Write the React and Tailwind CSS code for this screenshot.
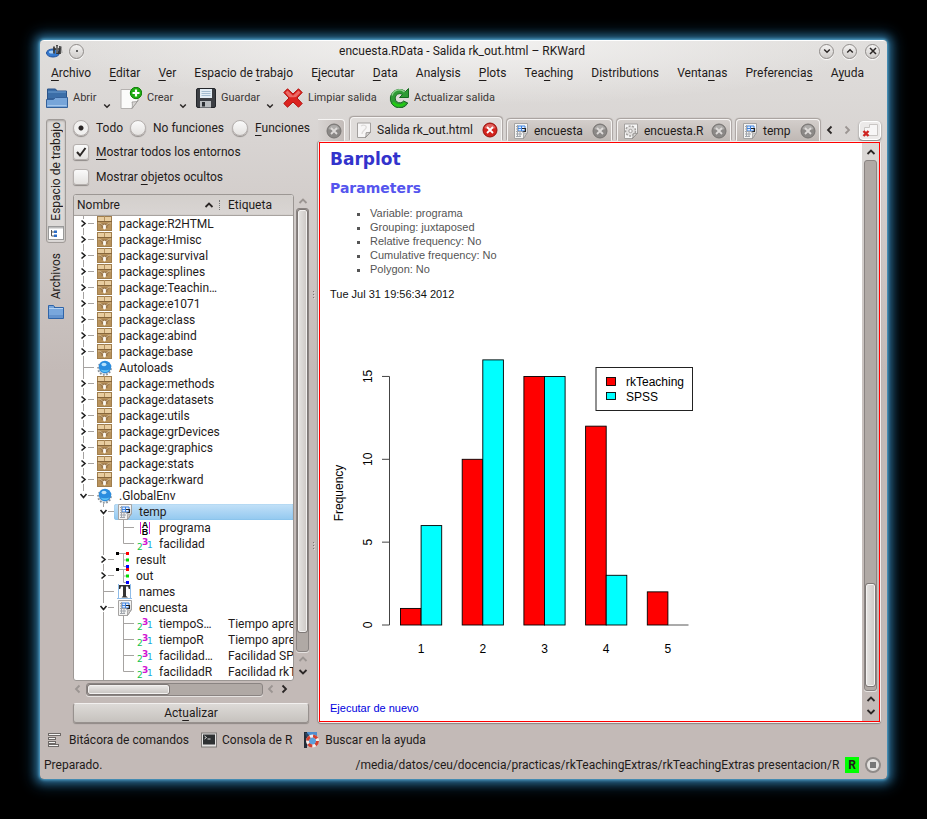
import React from "react";

const sans = "font-['Roboto','Noto_Sans',sans-serif]";

/* Text whose accelerator letter is preceded by "&". */
function Mnemonic({ text }) {
  const at = text.indexOf("&");
  if (at < 0) return <span className="whitespace-nowrap">{text}</span>;
  return (
    <span className="whitespace-pre">
      {text.slice(0, at)}
      <span className="underline underline-offset-[3px]">{text[at + 1]}</span>
      {text.slice(at + 2)}
    </span>
  );
}

function Chevron({ dir = "down", className = "text-[#2b2726]", size = 10 }) {
  const d = {
    down: "M1.5 3 5 6.5 8.5 3",
    up: "M1.5 7 5 3.5 8.5 7",
    left: "M6.5 1.5 3 5 6.5 8.5",
    right: "M3.5 1.5 7 5 3.5 8.5",
  }[dir];
  return (
    <svg viewBox="0 0 10 10" width={size} height={size} className={`block shrink-0 ${className}`}>
      <path d={d} fill="none" stroke="currentColor" strokeWidth="1.8" />
    </svg>
  );
}

/* ---------- icons ---------- */

function FolderIcon({ size = 22 }) {
  return (
    <svg viewBox="0 0 22 20" width={size} height={Math.round((size * 20) / 22)} className="block shrink-0">
      <path d="M1.500 1h8l1.500 2h9.500v8h-19z" fill="#3b6ea8" stroke="#2a5389" />
      <path d="M2 4h18" stroke="#6f9fd2" />
      <path d="M.5 11.500h7l2-2h12v10H.5z" fill="#77a5d9" stroke="#34619a" />
      <path d="M1.500 17.500h19" stroke="#a3c5ea" />
    </svg>
  );
}

function SideFolderIcon() {
  return (
    <svg viewBox="0 0 16 15" width="16" height="15" className="block">
      <path d="M.5 1.500h5l1.500 2h8.500v11H.5z" fill="#79a7dc" stroke="#2f64a8" />
      <path d="M1 4.500h14" stroke="#b5d3f3" />
      <path d="M6 3.500h9" stroke="#2f64a8" />
      <path d="M1 11h14v3H1z" fill="#6493cd" />
    </svg>
  );
}

function NewDocIcon() {
  return (
    <svg viewBox="0 0 22 22" width="22" height="22" className="block shrink-0">
      <path d="M1 2.500h17v11l-6 8H1z" fill="#fbfbfa" stroke="#b5b2b0" />
      <path d="M18 13.500c-2 2-4 1-6 1.500.5 2.500.5 4 0 6.500z" fill="#d9d7d5" stroke="#8d8a88" strokeWidth=".7" />
      <circle cx="16" cy="6" r="5.700" fill="#1fae12" stroke="#0d7d06" />
      <path d="M16 2.500v7M12.500 6h7" stroke="#fff" strokeWidth="2.200" />
    </svg>
  );
}

function SaveIcon() {
  return (
    <svg viewBox="0 0 20 20" width="20" height="20" className="block shrink-0">
      <rect x=".5" y=".5" width="19" height="19" rx="1.500" fill="#3c3f44" stroke="#23262a" />
      <rect x="4" y="1" width="12" height="9" fill="#e3edf5" />
      <path d="M5.500 3.500h9M5.500 5.500h9M5.500 7.500h9" stroke="#9cb7cc" strokeWidth=".9" />
      <rect x="4" y="13" width="11" height="6.500" fill="#b9bcbf" />
      <rect x="6" y="14" width="3" height="4.500" fill="#2c2f33" />
    </svg>
  );
}

function ClearIcon() {
  return (
    <svg viewBox="0 0 20 20" width="20" height="20" className="block shrink-0">
      <path d="M4.500 0.800 10 6l5.500-5.200L19.200 4.500 14 10l5.200 5.500-3.700 3.700L10 14l-5.500 5.200L.8 15.500 6 10 .8 4.500z" fill="#dc2420" stroke="#b3120f" />
      <path d="M4.500 2.500 10 7.800l5.500-5.300 2 2-4.500 4.500c-3 .3-5 .3-7 0L2.500 4.500z" fill="#f0837d" opacity=".75" />
    </svg>
  );
}

function ReloadIcon() {
  return (
    <svg viewBox="0 0 20 20" width="20" height="20" className="block shrink-0">
      <path d="M19.500.5v9h-9l3-3a4.600 4.600 0 1 0 1 6.500l4.300 2A9.300 9.300 0 1 1 16.500 3.500z" fill="#2f9c36" stroke="#176b20" />
      <path d="M3 7.500A7.500 7.500 0 0 1 15.500 4" stroke="#8ccf8d" fill="none" strokeWidth="1.500" />
      <path d="M4 14.500c3.500 4 9 4 12 .5" stroke="#22cf10" fill="none" strokeWidth="2" />
    </svg>
  );
}

function PackageIcon() {
  return (
    <svg viewBox="0 0 16 16" width="16" height="16" className="block">
      <rect x=".5" y=".5" width="14" height="14" fill="#b9935c" stroke="#a07e4d" />
      <path d="M1 1h13v4H1z" fill="#e8cda0" />
      <path d="M7.500 0v5" stroke="#b3905d" />
      <path d="M0 5.500h15" stroke="#86663c" />
      <path d="M1.500 7.500h12l-3 2.500v2h-6v-2z" fill="#98744a" />
      <path d="M1 7c2.500 0 4 1.500 5 2.500h3C10 8.500 11.500 7 14 7" fill="none" stroke="#ddc79e" strokeWidth=".8" />
      <ellipse cx="7.500" cy="11" rx="1.500" ry="2.500" fill="#fbf8f1" />
    </svg>
  );
}

function GlobeIcon() {
  return (
    <svg viewBox="0 0 16 16" width="16" height="16" className="block overflow-visible">
      <circle cx="7.500" cy="8.500" r="6.300" fill="#dfe3e6" stroke="#868e95" strokeWidth="2" strokeDasharray="1.500 1.700" />
      <circle cx="8" cy="7" r="6.200" fill="#2a8ddf" />
      <path d="M3.500 9.500a5.200 5.200 0 0 0 9 0c-2 1-7 1-9 0z" fill="#5fc3f6" />
      <ellipse cx="7" cy="4.500" rx="2.500" ry="1.800" fill="#b6e1fb" />
    </svg>
  );
}

function DataFrameIcon({ size = 16 }) {
  return (
    <svg viewBox="0 0 16 16" width={size} height={size} className="block">
      <path d="M1.500.5h13v9l-4 6h-9z" fill="#f4f4f3" stroke="#a5a3a2" />
      <path d="M14.500 9.500c-1.500 1-2.500.5-4 1v5z" fill="#cfcdcc" stroke="#8c8a89" strokeWidth=".6" />
      <path d="M5 3h7v5H5z" fill="#e5f0ff" stroke="#3c82e0" />
      <path d="M8.500 3v5M5 5.500h7" stroke="#3c82e0" />
      <path d="M3 3.500h1.500M3 6h1.500M3 8.500h6M3 11h6M3 13.500h5" stroke="#a0a5ac" />
      <path d="M4.500 2v12M7 9v5" stroke="#a0a5ac" />
      <path d="M9 5.500h3.500V9M9.500 9 12 8.500" stroke="#222" fill="none" strokeWidth="1.200" />
    </svg>
  );
}

function FactorIcon() {
  return (
    <svg viewBox="0 0 16 16" width="16" height="16" className="block overflow-visible">
      <path d="M3.500 2v12M12.500 2v12" stroke="#e020e0" />
      <text x="8" y="8" fontSize="9" textAnchor="middle" fontWeight="bold" fontFamily="Liberation Sans, sans-serif">A</text>
      <text x="8" y="15" fontSize="9" textAnchor="middle" fontWeight="bold" fontFamily="Liberation Sans, sans-serif">B</text>
    </svg>
  );
}

function NumericIcon() {
  return (
    <svg viewBox="0 0 16 16" width="16" height="16" className="block overflow-visible" fontFamily="DejaVu Sans, sans-serif">
      <text x="0" y="14" fontSize="9" fill="#12c34a">2</text>
      <text x="5" y="9" fontSize="9" fill="#d214d2" fontWeight="bold">3</text>
      <text x="10" y="12" fontSize="9" fill="#18a9dc">1</text>
    </svg>
  );
}

function ListIcon() {
  return (
    <svg viewBox="0 0 16 16" width="16" height="16" className="block overflow-visible">
      <path d="M1 1.500h10M6.500 1.500v13M6.500 8h5M6.500 14.500h5" stroke="#aaa" fill="none" />
      <path d="M-1 0h3v3h-3z" fill="#000" />
      <path d="M9 0h3v3H9z" fill="#f00" />
      <path d="M9 6.500h3v3H9z" fill="#0d0" />
      <path d="M9 13h3v3H9z" fill="#00f" />
    </svg>
  );
}

function CharIcon() {
  return (
    <svg viewBox="0 0 16 16" width="16" height="16" className="block">
      <path d="M1.500 0v14M13.500 0v14M0 14.500h15" stroke="#8fbce8" />
      <path d="M2 1h11v4h-1.200L11 2.500H9V12l2 1.500H4.500L6 12V2.500H4L3.200 5H2z" fill="#333" />
    </svg>
  );
}

function DocIcon({ gear }) {
  return (
    <svg viewBox="0 0 16 16" width="16" height="16" className="block shrink-0">
      <path d="M1.500 1h13v9l-5 5.500h-8z" fill="#f7f6f6" stroke="#a3a09e" />
      {gear ? (
        <g stroke="#a19e9c">
          <circle cx="7.500" cy="8" r="5" fill="#e2e0df" strokeWidth="1.500" strokeDasharray="2 1.500" />
          <circle cx="7.500" cy="8" r="1.700" fill="#f7f6f6" />
        </g>
      ) : (
        <path d="M5 4c3-2 6 0 5 2S6 9 6 12" stroke="#dddbda" fill="none" strokeWidth="1.300" />
      )}
      <path d="M14.500 10c-2 1-3 .3-4.500.8.3 1.700 0 3-.5 4.700z" fill="#dcdad9" stroke="#7f7c7a" strokeWidth=".7" />
    </svg>
  );
}

function TreeViewIcon() {
  return (
    <svg viewBox="0 0 16 16" width="16" height="16" className="block">
      <rect x=".5" y="1.500" width="15" height="13" fill="#fff" stroke="#999" />
      <path d="M1 2h14v1.500H1z" fill="#bbb" />
      <path d="M3.500 5v6h3M3.500 7h3" stroke="#555" fill="none" />
      <path d="M6 5.500h3v2.500H6zM6 9.500h3V12H6z" fill="#2c6cc4" />
    </svg>
  );
}

function AppIcon() {
  return (
    <svg viewBox="0 0 18 14" width="18" height="14" className="block">
      <ellipse cx="7" cy="9" rx="6.500" ry="4" fill="#3479cf" stroke="#1d4e9a" />
      <ellipse cx="6" cy="8" rx="3" ry="1.500" fill="#a9d0f5" />
      <path d="M8 2.500v7M11 1v9M14 2v8M8 5h6M12 10l3-7" stroke="#333" strokeWidth="1.700" />
      <path d="M11 2v7M15 2l1 7" stroke="#999" />
    </svg>
  );
}

function LogIcon() {
  return (
    <svg viewBox="0 0 16 16" width="16" height="16" className="block">
      <g fill="#f5f4f3" stroke="#6e6967">
        <rect x="1.500" y="1.500" width="12" height="2" />
        <rect x="1.500" y="5.500" width="7" height="2" />
        <rect x="1.500" y="9.500" width="7" height="2" />
        <rect x="1.500" y="12.500" width="10" height="2" />
      </g>
    </svg>
  );
}

function ConsoleIcon() {
  return (
    <svg viewBox="0 0 16 16" width="16" height="16" className="block">
      <rect x=".5" y="1" width="15" height="14" fill="#e4e3e2" stroke="#7d7977" />
      <rect x="2" y="2.500" width="12" height="10" fill="#2e3133" />
      <path d="m3.500 4 2 1.500-2 1.500M6.500 7h3" stroke="#eee" fill="none" strokeWidth=".9" />
    </svg>
  );
}

function HelpIcon() {
  return (
    <svg viewBox="0 0 16 16" width="16" height="16" className="block">
      <path d="M0 0h3v16H0z" fill="#222c38" />
      <path d="M3 0h10v14H3z" fill="#4d8fd0" />
      <path d="M1 1h2l3 3-3 3z" fill="#2c4563" />
      <circle cx="8.500" cy="9" r="5" fill="#5aa0dc" stroke="#f4f0ee" strokeWidth="3" />
      <circle cx="8.500" cy="9" r="5" fill="none" stroke="#d3402f" strokeWidth="3" strokeDasharray="4.500 3.354" />
    </svg>
  );
}

/* ---------- window chrome ---------- */

function RoundButton({ label, children }) {
  return (
    <button
      aria-label={label}
      className="flex size-[15px] items-center justify-center rounded-full border border-[#8f8b89] bg-linear-to-b from-[#f4f3f2] to-[#cfccca] shadow-[0_1px_1px_#fff]"
    >
      {children}
    </button>
  );
}

function TitleBar() {
  return (
    <header className="flex h-[20px] items-center pr-[7px] pl-[6px]">
      <div className="flex w-[60px] items-center gap-[5px]">
        <AppIcon />
        <RoundButton label="Menú de la ventana">
          <span className="size-[2px] rounded-full bg-[#333]" />
        </RoundButton>
      </div>
      <h1 className="grow text-center text-[12px] leading-4">encuesta.RData - Salida rk_out.html – RKWard</h1>
      <div className="flex w-[62px] justify-end gap-[8px]">
        <RoundButton label="Minimizar"><Chevron dir="down" size={8} /></RoundButton>
        <RoundButton label="Maximizar"><Chevron dir="up" size={8} /></RoundButton>
        <RoundButton label="Cerrar">
          <svg viewBox="0 0 8 8" width="8" height="8"><path d="m1 1 6 6M7 1 1 7" stroke="#2b2726" strokeWidth="1.500" /></svg>
        </RoundButton>
      </div>
    </header>
  );
}

const menus = [
  "&Archivo", "&Editar", "&Ver", "Espacio de &trabajo", "E&jecutar", "&Data", "Anal&ysis",
  "&Plots", "Tea&ching", "D&istributions", "Venta&nas", "Preferencia&s", "A&yuda",
];

function MenuBar() {
  return (
    <nav className="flex h-[23px] items-center justify-between pr-[23px] pl-[11px]">
      {menus.map((m) => (
        <button key={m} className="text-[12px] leading-4"><Mnemonic text={m} /></button>
      ))}
    </nav>
  );
}

function ToolButton({ icon, label, drop, width }) {
  return (
    <button className={`flex h-6 shrink-0 items-center gap-[5px] text-[11px] leading-4 ${width}`}>
      {icon}
      <span className="whitespace-nowrap">{label}</span>
      {drop && <Chevron size={8} className="mt-4 ml-auto text-[#2b2726]" />}
    </button>
  );
}

function ToolBar() {
  return (
    <div className="flex h-[33px] items-center gap-[9px] pb-[5px] pl-[6px] text-[#3a3635]">
      <ToolButton icon={<FolderIcon />} label="Abrir" drop width="w-[65px]" />
      <ToolButton icon={<NewDocIcon />} label="Crear" drop width="w-[67px]" />
      <ToolButton icon={<SaveIcon />} label="Guardar" drop width="w-[78px]" />
      <ToolButton icon={<ClearIcon />} label="Limpiar salida" width="w-[97px]" />
      <ToolButton icon={<ReloadIcon />} label="Actualizar salida" width="" />
    </div>
  );
}

/* ---------- left dock ---------- */

function SideTabs() {
  const label = "rotate-180 text-[12px] leading-4 [writing-mode:vertical-rl]";
  return (
    <div className="flex w-[22px] shrink-0 flex-col items-start gap-[10px] pt-[2px]">
      <button className="flex w-[20px] flex-col items-center gap-[4px] rounded-[3px] border border-[#a09b98] bg-[#dcd9d7] pt-[2px] pb-px shadow-[inset_0_1px_2px_#a8a3a0]">
        <span className={label}>Espacio de trabajo</span>
        <TreeViewIcon />
      </button>
      <button className="flex w-[20px] flex-col items-center gap-[5px]">
        <span className={label}>Archivos</span>
        <SideFolderIcon />
      </button>
    </div>
  );
}

function Radio({ text, checked, className }) {
  return (
    <label className={`flex shrink-0 items-center gap-[7px] ${className}`}>
      <input
        type="radio"
        name="filter"
        defaultChecked={checked}
        className="size-4 shrink-0 appearance-none rounded-full border border-[#b5b0ae] bg-linear-to-b from-[#fafafa] to-[#e4e2e0] shadow-[0_1px_1px_#8f8a88] checked:bg-[radial-gradient(circle,#2b2726_0_2px,#f1f0ef_3px)]"
      />
      <Mnemonic text={text} />
    </label>
  );
}

function Check({ text, checked }) {
  return (
    <label className="flex h-[25px] items-center gap-[7px]">
      <span className="relative flex size-4 shrink-0">
        <input
          type="checkbox"
          defaultChecked={checked}
          className="peer size-4 appearance-none rounded-[3px] border border-[#b5b0ae] bg-linear-to-b from-[#fafafa] to-[#e4e2e0] shadow-[0_1px_1px_#8f8a88]"
        />
        <svg viewBox="0 0 16 16" className="pointer-events-none absolute inset-0 hidden size-4 peer-checked:block">
          <path d="m4 8 3 3.500L12.500 4" fill="none" stroke="#2b2726" strokeWidth="2" />
        </svg>
      </span>
      <Mnemonic text={text} />
    </label>
  );
}

const pkg = (name) => ({ level: 0, icon: "pkg", name, arrow: "right" });
const rows = [
  ...["R2HTML", "Hmisc", "survival", "splines", "Teachin…", "e1071", "class", "abind", "base"].map((n) => pkg(`package:${n}`)),
  { level: 0, icon: "env", name: "Autoloads" },
  ...["methods", "datasets", "utils", "grDevices", "graphics", "stats", "rkward"].map((n) => pkg(`package:${n}`)),
  { level: 0, icon: "env", name: ".GlobalEnv", arrow: "down", last: true },
  { level: 1, icon: "df", name: "temp", arrow: "down", selected: true },
  { level: 2, icon: "factor", name: "programa" },
  { level: 2, icon: "num", name: "facilidad", last: true },
  { level: 1, icon: "list", name: "result", arrow: "right" },
  { level: 1, icon: "list", name: "out", arrow: "right" },
  { level: 1, icon: "char", name: "names" },
  { level: 1, icon: "df", name: "encuesta", arrow: "down" },
  { level: 2, icon: "num", name: "tiempoS…", tag: "Tiempo apre" },
  { level: 2, icon: "num", name: "tiempoR", tag: "Tiempo apre" },
  { level: 2, icon: "num", name: "facilidad…", tag: "Facilidad SPS" },
  { level: 2, icon: "num", name: "facilidadR", tag: "Facilidad rkT", last: true },
];

const icons = {
  pkg: <PackageIcon />, env: <GlobeIcon />, df: <DataFrameIcon />, factor: <FactorIcon />,
  num: <NumericIcon />, list: <ListIcon />, char: <CharIcon />,
};

/* One 20px indentation step: a passing line, or the row's own branch. */
function Guide({ kind, arrow, last }) {
  return (
    <svg viewBox="0 0 20 16" width="20" height="16" className="block shrink-0 overflow-visible">
      <g stroke="#a6a3a1" fill="none">
        {kind === "pass" && <path d="M9.500 0v16" />}
        {kind === "branch" && !arrow && <path d={last ? "M9.500 0v7.500h10.500" : "M9.500 0v16M9.500 7.500h10.500"} />}
        {kind === "branch" && arrow && <path d={last ? "M9.500 0v3M14 7.500h6" : "M9.500 0v3M9.500 12v4M14 7.500h6"} />}
      </g>
      {arrow && (
        <path d={arrow === "right" ? "m7.500 4.500 3.500 3-3.500 3" : "m6.500 6 3 3.500 3-3.500"} fill="none" stroke="#222" strokeWidth="1.600" />
      )}
    </svg>
  );
}

function TreeTable() {
  return (
    <div className="grow overflow-hidden rounded-[3px] border border-[#9c9794] bg-white">
      <table className="w-full table-fixed border-collapse text-left text-[12px]">
        <thead>
          <tr className="h-[20px] border-b border-[#a8a3a0] bg-linear-to-b from-[#d3cfcc] to-[#d9d5d3]">
            <th className="w-[150px] p-0 pr-1 pl-[3px] font-normal leading-4">
              <div className="flex items-center justify-between">
                Nombre
                <span className="flex items-center gap-[5px]">
                  <Chevron dir="up" />
                  <span className="h-[10px] border-l border-dotted border-[#777]" />
                </span>
              </div>
            </th>
            <th className="p-0 pl-[4px] font-normal leading-4">Etiqueta</th>
          </tr>
        </thead>
        <tbody>
          {rows.map((r, i) => (
            <tr key={i} className="h-4">
              <td className="p-0" colSpan={r.tag ? 1 : 2}>
                <div className="flex h-4">
                  {r.level > 0 && <span className="w-[20px] shrink-0" />}
                  {r.level > 1 && <Guide kind="pass" />}
                  <Guide kind="branch" arrow={r.arrow} last={r.last} />
                  <div
                    className={`flex min-w-0 grow items-center rounded-l-[3px] pl-[3px] ${
                      r.selected ? "bg-linear-to-b from-[#c3e1f8] to-[#92c8ef] shadow-[inset_0_0_1px_#4d97cf]" : ""
                    }`}
                  >
                    {icons[r.icon]}
                    <span className={`whitespace-nowrap leading-4 ${r.icon === "list" ? "pl-[3px]" : "pl-[6px]"}`}>{r.name}</span>
                  </div>
                </div>
              </td>
              {r.tag && <td className="p-0 pl-[4px] leading-4 whitespace-nowrap">{r.tag}</td>}
            </tr>
          ))}
        </tbody>
      </table>
    </div>
  );
}

const groove = "rounded-[3px] border border-[#8a8482] bg-[#b0a9a5] shadow-[0_1px_0_#e6e3e1]";
const thumb = "rounded-[2px] border border-[#f3f1f0] outline outline-[#7e7876]";

function WorkspacePanel() {
  return (
    <section className="flex w-[237px] shrink-0 flex-col pl-px text-[12px] leading-4">
      <div className="flex h-[22px] items-center">
        <Radio text="Todo" checked className="w-[57px]" />
        <Radio text="No funciones" className="w-[102px]" />
        <Radio text="&Funciones" className="" />
      </div>
      <Check text="&Mostrar todos los entornos" checked />
      <Check text="Mostrar &objetos ocultos" />
      <div className="mt-[5px] flex min-h-0 grow gap-[2px]">
        <TreeTable />
        <div className="flex w-[13px] shrink-0 flex-col items-center">
          <Chevron dir="up" className="my-[2px] text-[#9b9592]" />
          <div className={`flex w-[13px] grow flex-col p-px ${groove}`}>
            <div className={`h-[96%] bg-linear-to-r from-[#e3e1df] to-[#cfcbc8] ${thumb}`} />
          </div>
          <Chevron dir="up" className="my-[2px] text-[#9b9592]" />
          <Chevron dir="down" className="mt-px mb-[4px] text-[#2b2726]" />
        </div>
      </div>
      <div className="flex h-[16px] items-center gap-[3px] pr-[20px]">
        <Chevron dir="left" className="text-[#9b9592]" />
        <div className={`h-[13px] grow p-px ${groove}`}>
          <div className={`h-full w-[47%] bg-linear-to-b from-[#e8e6e4] to-[#cbc7c4] ${thumb}`} />
        </div>
        <Chevron dir="left" className="text-[#9b9592]" />
        <Chevron dir="right" className="text-[#2b2726]" />
      </div>
      <button className="mt-[6px] h-[20px] rounded-[3px] border border-[#97918e] border-t-[#f2f0ef] bg-linear-to-b from-[#dddad7] to-[#c6c2be] shadow-[0_1px_1px_#8f8986]">
        <Mnemonic text="Act&ualizar" />
      </button>
    </section>
  );
}

function Grip() {
  return (
    <span className="flex flex-col gap-[2px]">
      {[0, 1, 2].map((i) => <span key={i} className="size-px bg-[#7c7471] shadow-[1px_1px_0_#dedad8]" />)}
    </span>
  );
}

/* ---------- output view ---------- */

function CloseDot({ active }) {
  return (
    <button aria-label="Cerrar pestaña" className="ml-auto">
      <svg viewBox="0 0 16 16" width="16" height="16" className="block">
        <circle cx="8" cy="8" r="7" fill={active ? "#d3231d" : "#8b8886"} stroke={active ? "#96110d" : "#777472"} />
        <path d="M2.500 6a5.800 5.800 0 0 1 11 0c-3 1.500-8 1.500-11 0z" fill="#fff" opacity=".3" />
        <path d="m5 5 6 6M11 5l-6 6" stroke={active ? "#fff" : "#dedbd9"} strokeWidth="1.800" />
      </svg>
    </button>
  );
}

function Tab({ icon, label, active, width }) {
  return (
    <div
      className={`flex shrink-0 items-center gap-[6px] rounded-t-[4px] border border-b-0 border-[#f6f4f3] pr-[3px] pl-[5px] shadow-[-1px_-1px_1px_#aaa4a1,1px_-1px_1px_#aaa4a1] ${width} ${
        active ? "h-[24px] bg-[#dfdcda]" : "h-[22px] bg-linear-to-b from-[#d3cecb] to-[#bfb8b4]"
      }`}
    >
      <button role="tab" aria-selected={!!active} className="flex items-center gap-[5px] text-[12px] leading-4 whitespace-nowrap">
        {icon}
        {label}
      </button>
      <CloseDot active={active} />
    </div>
  );
}

function TabStrip() {
  return (
    <div className="flex h-[24px] items-end gap-[5px]">
      <div className="flex h-[22px] w-[27px] shrink-0 items-center rounded-tr-[4px] border-t border-r border-[#f6f4f3] bg-linear-to-r from-[#d8d4d2] to-[#c3bcb9] pr-[2px]">
        <CloseDot />
      </div>
      <Tab active icon={<DocIcon />} label="Salida rk_out.html" width="w-[152px]" />
      <Tab icon={<DataFrameIcon />} label="encuesta" width="w-[105px]" />
      <Tab icon={<DocIcon gear />} label="encuesta.R" width="w-[114px]" />
      <Tab icon={<DataFrameIcon />} label="temp" width="w-[84px]" />
      <div className="flex h-[22px] grow items-center justify-end gap-[7px]">
        <button aria-label="Pestañas anteriores"><Chevron dir="left" /></button>
        <button aria-label="Pestañas siguientes"><Chevron dir="right" className="text-[#9b9592]" /></button>
        <button aria-label="Cerrar pestaña actual" className="flex h-[19px] w-[22px] items-center justify-center rounded-[4px] border border-[#fff] bg-[#eceae9] shadow-[0_1px_2px_#777]">
          <svg viewBox="0 0 18 16" width="18" height="16">
            <path d="M3.500 13.500v-8h5v-3h8v11z" fill="#f7f6f6" stroke="#c9c6c4" />
            <path d="m2.500 9 5 5M7.500 9l-5 5" stroke="#cf2320" strokeWidth="2.400" />
          </svg>
        </button>
      </div>
    </div>
  );
}

const data = [[1, 6], [10, 16], [15, 15], [12, 3], [2, 0]];

function BarChart() {
  const unit = 16.57;
  const base = 312;
  return (
    <svg viewBox="0 0 370 360" width="370" height="360" className="block" fontFamily="Liberation Sans, Arial, sans-serif" fontSize="12">
      <path d={`M59.500 ${base - 15 * unit}V${base}`} stroke="#444" />
      {[0, 5, 10, 15].map((v) => {
        const y = base - v * unit;
        return (
          <g key={v}>
            <path d={`M52 ${y}h7.500`} stroke="#444" />
            <text transform={`translate(42 ${y}) rotate(-90)`} textAnchor="middle">{v}</text>
          </g>
        );
      })}
      <text transform="translate(13 180) rotate(-90)" textAnchor="middle">Frequency</text>
      {data.map(([a, b], i) => {
        const x = 70.5 + i * 61.7;
        return (
          <g key={i} stroke="#000" strokeWidth=".9">
            <rect x={x} y={base - a * unit} width="20.600" height={a * unit} fill="#f00" />
            {b > 0 ? (
              <rect x={x + 20.6} y={base - b * unit} width="20.600" height={b * unit} fill="#0ff" />
            ) : (
              <path d={`M${x + 20.6} ${base}h20.600`} stroke="#444" />
            )}
            <text x={x + 20.6} y={base + 28} textAnchor="middle" stroke="none">{i + 1}</text>
          </g>
        );
      })}
      <rect x="266" y="54.500" width="96.500" height="43" fill="#fff" stroke="#222" />
      <rect x="276.500" y="64.500" width="9" height="8" fill="#f00" stroke="#000" strokeWidth=".9" />
      <rect x="276.500" y="79.500" width="9" height="7" fill="#0ff" stroke="#000" strokeWidth=".9" />
      <text x="296" y="73">rkTeaching</text>
      <text x="296" y="88">SPSS</text>
    </svg>
  );
}

function OutputView() {
  const items = ["Variable: programa", "Grouping: juxtaposed", "Relative frequency: No", "Cumulative frequency: No", "Polygon: No"];
  return (
    <div className="flex min-h-0 grow rounded-[3px] border border-[#f3f1f0] shadow-[0_1px_1px_#8b8481,-1px_0_1px_#9b9491]">
      <div className="flex grow bg-[#ff0000] p-px">
        <article className="flex grow flex-col bg-white pl-[10px] font-['Liberation_Sans',Arial,sans-serif] text-[11px] leading-[14px] text-[#111]">
          <h2 className="mt-[5px] font-['DejaVu_Sans',sans-serif] text-[17px] leading-[22px] font-bold text-[#3333cc]">Barplot</h2>
          <h3 className="mt-[9px] font-['DejaVu_Sans',sans-serif] text-[14px] leading-[18px] font-bold text-[#5555ee]">Parameters</h3>
          <ul className="mt-[9px] list-[square] pl-[40px] text-[#555]">
            {items.map((t) => <li key={t}>{t}</li>)}
          </ul>
          <p className="mt-[11px]">Tue Jul 31 19:56:34 2012</p>
          <div className="mt-[12px]"><BarChart /></div>
          <a href="#run" className="mt-auto mb-[6px] text-[#0000e0]">Ejecutar de nuevo</a>
        </article>
        <div className="flex w-[17px] shrink-0 flex-col items-center gap-[3px] bg-linear-to-b from-[#dcd9d7] via-[#c8c1be] via-40% to-[#c3bab7] py-[4px]">
          <Chevron dir="up" />
          <div className={`flex w-[13px] grow flex-col justify-end p-px pb-[4px] ${groove}`}>
            <div className={`h-[102px] bg-linear-to-r from-[#e3e1df] to-[#cfcbc8] ${thumb}`} />
          </div>
          <Chevron dir="up" />
          <Chevron dir="down" />
        </div>
      </div>
    </div>
  );
}

/* ---------- bottom ---------- */

function BottomTabs() {
  const item = "flex items-center gap-[5px] text-[12px] leading-4";
  return (
    <div className="flex h-[33px] items-center gap-[12px] pl-[7px]">
      <button className={item}><LogIcon /><span className="pl-px">Bitácora de comandos</span></button>
      <button className={item}><ConsoleIcon />Consola de R</button>
      <button className={item}><HelpIcon />Buscar en la ayuda</button>
    </div>
  );
}

function StatusBar() {
  return (
    <footer className="flex h-[23px] items-center gap-[6px] pb-[6px] pr-[6px] pl-[4px] text-[12px] leading-4">
      <span>Preparado.</span>
      <span className="ml-auto">/media/datos/ceu/docencia/practicas/rkTeachingExtras/rkTeachingExtras presentacion/R</span>
      <span className="bg-[#00ff00] px-[3px] font-bold">R</span>
      <button aria-label="Interrumpir" className="flex size-4 items-center justify-center rounded-full border-2 border-[#8f8b89] bg-[#e4e2e0]">
        <span className="size-[6px] bg-[#777]" />
      </button>
    </footer>
  );
}

export default function App() {
  return (
    <div className={`flex min-h-screen flex-col bg-black p-10 text-[#1f1b1a] ${sans}`}>
      <div className="flex grow flex-col rounded-[4px] border-t border-white bg-[radial-gradient(ellipse_420px_64px_at_50%_0,#f3f2f1,transparent),linear-gradient(#e0dedc,#d8d4d2_100px,#c3bab7_330px)] shadow-[0_0_3px_1px_#59a7cf,0_0_8px_4px_#2a688c,0_0_14px_8px_#0d2a3e]">
        <TitleBar />
        <MenuBar />
        <ToolBar />
        <main className="flex min-h-0 grow pr-[6px] pl-[6px]">
          <SideTabs />
          <div className="flex w-[4px] shrink-0" />
          <WorkspacePanel />
          <div className="flex w-[9px] shrink-0 flex-col items-center justify-between pt-[174px] pb-[174px]">
            <Grip />
            <Grip />
          </div>
          <section className="flex min-w-0 grow flex-col">
            <TabStrip />
            <OutputView />
          </section>
        </main>
        <BottomTabs />
        <StatusBar />
      </div>
    </div>
  );
}
